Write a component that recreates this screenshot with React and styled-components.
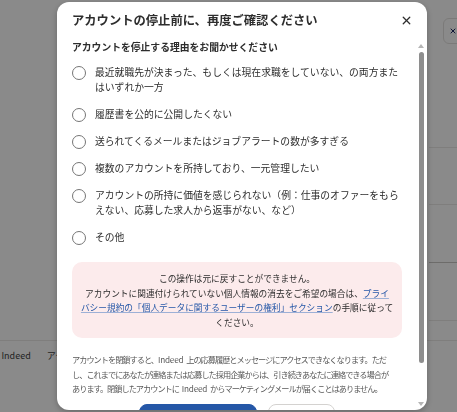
import * as React from "react";
import styled, { createGlobalStyle } from "styled-components";
import { X } from "lucide-react";

const GlobalStyle = createGlobalStyle`
    html, body {
        margin: 0;
        padding: 0;
        background: #ffffff;
        font-family: "Noto Sans CJK JP", "Noto Sans", sans-serif;
        overflow: hidden;
    }
`;

const Page = styled.div`
    width: 457px;
    height: 412px;
    display: flex;
    flex-direction: column;
    color: #2d2d2d;
`;

const Main = styled.div`
    height: 340px;
    display: flex;
`;

const MainLeft = styled.div`
    width: 429px;
    flex-shrink: 0;
`;

const Side = styled.div`
    flex: 1;
    min-width: 0;
    display: flex;
    flex-direction: column;
`;

const SideRow = styled.div`
    height: ${(p) => p.h}px;
    border-bottom: 1px solid ${(p) => (p.strong ? "#c9c7c5" : "#ebe9e7")};
    display: flex;
    align-items: flex-start;
    padding-left: 14px;
`;

const SideButton = styled.div`
    flex-shrink: 0;
    width: 30px;
    height: 26px;
    margin-top: 18px;
    border: 1px solid #e4e2e0;
    border-radius: 6px;
    display: flex;
    align-items: center;
    padding-left: 5px;
    box-sizing: border-box;
    color: #1f2a66;
`;

const Footer = styled.div`
    border-top: 1px solid #ebe9e7;
    display: flex;
    gap: 16px;
    padding-top: 8px;
    margin-left: -28px;
    font-size: 9px;
    color: #424242;
    white-space: nowrap;
`;

const Overlay = styled.div`
    position: fixed;
    inset: 0;
    background: rgba(0, 0, 0, 0.46);
`;

const Modal = styled.div`
    margin: 2px 0 0 57px;
    width: 370px;
    height: 408px;
    background: #ffffff;
    border-radius: 12px;
    overflow: hidden;
    display: flex;
    flex-direction: column;
    box-shadow: 0 2px 6px rgba(0, 0, 0, 0.25);
`;

const Header = styled.div`
    height: 36px;
    flex-shrink: 0;
    display: flex;
    align-items: center;
    justify-content: space-between;
    padding: 0 14px 0 15px;
`;

const Title = styled.h1`
    margin: 0;
    font-size: 12.3px;
    font-weight: 700;
    color: #2d2d2d;
`;

const Close = styled.button`
    border: 0;
    background: none;
    padding: 0;
    display: flex;
    color: #2d2d2d;
`;

const Body = styled.div`
    flex: 1;
    min-height: 0;
    display: flex;
`;

const Content = styled.div`
    flex: 1;
    min-width: 0;
    overflow: hidden;
    padding: 0 13px 0 15px;
`;

const Scrollbar = styled.div`
    width: 12px;
    flex-shrink: 0;
    display: flex;
    flex-direction: column;
    align-items: center;
    padding: 6px 0 4px;
    box-sizing: border-box;
`;

const Arrow = styled.span`
    width: 0;
    height: 0;
    border-left: 3px solid transparent;
    border-right: 3px solid transparent;
    ${(p) => (p.down ? "border-top" : "border-bottom")}: 4px solid #b5b5b5;
    margin-top: ${(p) => (p.down ? "auto" : "0")};
`;

const Thumb = styled.span`
    width: 5px;
    height: 311px;
    margin-top: 4px;
    border-radius: 3px;
    background: #8e8e8e;
`;

const Question = styled.h2`
    margin: 0;
    font-size: 9.8px;
    line-height: 18px;
    font-weight: 700;
    color: #2d2d2d;
`;

const Options = styled.div`
    margin-top: 9px;
    display: flex;
    flex-direction: column;
    gap: 12px;
`;

const Option = styled.label`
    display: flex;
    gap: 9px;
    align-items: flex-start;
    font-size: 9.8px;
    line-height: 15px;
    color: #2d2d2d;
`;

const Radio = styled.span`
    flex-shrink: 0;
    width: 14px;
    height: 14px;
    margin-top: 0.5px;
    border: 1px solid #767676;
    border-radius: 50%;
    box-sizing: border-box;
`;

const Notice = styled.div`
    margin-top: 17px;
    background: #fcebec;
    border-radius: 10px;
    padding: 10px 5px 8px;
    font-size: 8.7px;
    line-height: 14.5px;
    text-align: center;
    color: #2d2d2d;

    p {
        margin: 0;
    }
`;

const Link = styled.a`
    color: #2557a7;
    text-decoration: underline;
    text-decoration-color: #9db0d6;
`;

const Fine = styled.p`
    margin: 14px 0 0;
    font-size: 8.2px;
    letter-spacing: -1px;
    word-spacing: 2px;
    line-height: 14.5px;
    white-space: nowrap;
    color: #595959;
`;

const Brand = styled.span`
    letter-spacing: -0.2px;
`;

const Actions = styled.div`
    margin-top: 8px;
    padding-bottom: 14px;
    display: flex;
    justify-content: center;
    gap: 11px;
`;

const Button = styled.button`
    height: 36px;
    width: ${(p) => p.w}px;
    border-radius: 8px;
    font-family: inherit;
    font-size: 10px;
    font-weight: 700;
    border: 1px solid ${(p) => (p.primary ? "#2557a7" : "#d4d2d0")};
    background: ${(p) => (p.primary ? "#2557a7" : "#ffffff")};
    color: ${(p) => (p.primary ? "#ffffff" : "#2d2d2d")};
`;

const reasons = [
    "最近就職先が決まった、もしくは現在求職をしていない、の両方またはいずれか一方",
    "履歴書を公的に公開したくない",
    "送られてくるメールまたはジョブアラートの数が多すぎる",
    "複数のアカウントを所持しており、一元管理したい",
    "アカウントの所持に価値を感じられない（例：仕事のオファーをもらえない、応募した求人から返事がない、など）",
    "その他",
];

export default function App() {
    return (
        <>
            <GlobalStyle />
            <Page>
                <Main>
                    <MainLeft />
                    <Side>
                        <SideRow h={147}>
                            <SideButton>
                                <X size={8} strokeWidth={3} />
                            </SideButton>
                        </SideRow>
                        <SideRow h={56} />
                        <SideRow h={57} strong />
                        <SideRow h={57} />
                    </Side>
                </Main>
                <Footer>
                    <span>©2025 Indeed</span>
                    <span>アクセシビリティ</span>
                </Footer>
            </Page>
            <Overlay>
                <Modal>
                    <Header>
                        <Title>アカウントの停止前に、再度ご確認ください</Title>
                        <Close aria-label="閉じる">
                            <X size={13} strokeWidth={2.4} />
                        </Close>
                    </Header>
                    <Body>
                        <Content>
                            <Question>アカウントを停止する理由をお聞かせください</Question>
                            <Options>
                                {reasons.map((r) => (
                                    <Option key={r}>
                                        <Radio />
                                        <span>{r}</span>
                                    </Option>
                                ))}
                            </Options>
                            <Notice>
                                <p>この操作は元に戻すことができません。</p>
                                <p>
                                    アカウントに関連付けられていない個人情報の消去をご希望の場合は、
                                    <Link>
                                        プライ<br />バシー規約の「個人データに関するユーザーの権利」セクション
                                    </Link>
                                    の手順に従って<br />ください。
                                </p>
                            </Notice>
                            <Fine>
                                アカウントを閉鎖すると、<Brand>Indeed</Brand> 上の応募履歴とメッセージにアクセスできなくなります。ただ<br />
                                し、これまでにあなたが連絡または応募した採用企業からは、引き続きあなたに連絡できる場合が<br />
                                あります。閉鎖したアカウントに <Brand>Indeed</Brand> からマーケティングメールが届くことはありません。
                            </Fine>
                            <Actions>
                                <Button primary w={118}>アカウントを停止</Button>
                                <Button w={67}>キャンセル</Button>
                            </Actions>
                        </Content>
                        <Scrollbar>
                            <Arrow />
                            <Thumb />
                            <Arrow down />
                        </Scrollbar>
                    </Body>
                </Modal>
            </Overlay>
        </>
    );
}
